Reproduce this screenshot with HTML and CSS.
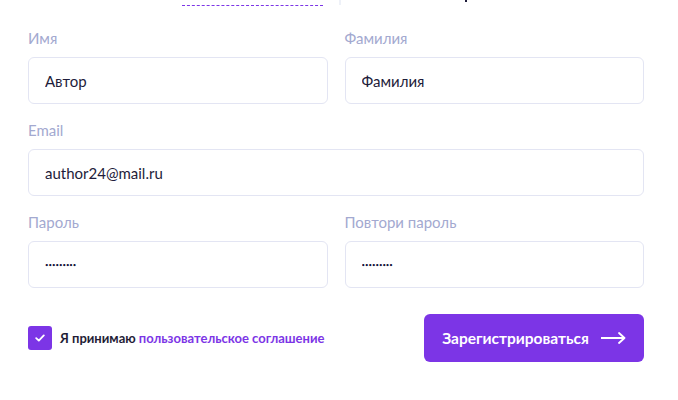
FILE: index.html
```html
<!DOCTYPE html>
<html lang="ru">
<head>
    <meta charset="UTF-8">
    <meta name="viewport" content="width=device-width, initial-scale=1.0">
    <title>Регистрация</title>
    <link rel="stylesheet" href="styles.css">
</head>
<body>
    <div class="tabs">
        <div class="tab tab-login"></div>
        <div class="tab-sep"></div>
        <div class="tab tab-reg"><span class="tab-mark"></span></div>
    </div>
    <form class="form">
        <div class="field">
            <label class="label">Имя</label>
            <input class="input" type="text" value="Автор">
        </div>
        <div class="field">
            <label class="label">Фамилия</label>
            <input class="input" type="text" value="Фамилия">
        </div>
        <div class="field wide">
            <label class="label">Email</label>
            <input class="input" type="text" value="author24@mail.ru">
        </div>
        <div class="field">
            <label class="label">Пароль</label>
            <input class="input pass" type="password" value="123456789">
        </div>
        <div class="field">
            <label class="label">Повтори пароль</label>
            <input class="input pass" type="password" value="123456789">
        </div>
        <div class="bottom wide">
            <label class="agree">
                <span class="check">
                    <svg width="10" height="8" viewBox="0 0 10 8"><path d="M1.2 4.2 L3.8 6.6 L8.8 1.4" fill="none" stroke="#fff" stroke-width="1.8" stroke-linecap="round" stroke-linejoin="round"/></svg>
                </span>
                <span>Я принимаю <a href="#" class="link">пользовательское соглашение</a></span>
            </label>
            <button class="submit" type="button">
                Зарегистрироваться
                <svg width="25" height="12" viewBox="0 0 25 12"><path d="M0 6 H23 M18 1 L23.5 6 L18 11" fill="none" stroke="#fff" stroke-width="1.8" stroke-linecap="round" stroke-linejoin="round"/></svg>
            </button>
        </div>
    </form>
</body>
</html>
```

FILE: styles.css
```css
body{
    margin:0;
    padding:0 34px 0 28px;
    background:#fff;
    font-family:Lato, "Noto Sans", sans-serif;
    color:#1e1c3a;
}
.tabs{
    display:flex;
    align-items:flex-end;
    height:6px;
    padding-left:154px;
}
.tab{
    height:6px;
}
.tab-login{
    width:141px;
    margin-right:16px;
    border-bottom:1px dashed #7c35e6;
    box-sizing:border-box;
}
.tab-sep{
    width:2px;
    height:5px;
    align-self:flex-start;
    background:#eef1f8;
}
.tab-reg{
    width:260px;
    position:relative;
}
/* descender of the cut-off tab title */
.tab-mark{
    position:absolute;
    left:124px;
    top:0;
    width:2px;
    height:2px;
    background:#1e1c3a;
}
.form{
    display:grid;
    grid-template-columns:1fr 1fr;
    column-gap:17px;
    row-gap:16px;
    margin-top:22px;
}
.field{
    display:flex;
    flex-direction:column;
}
.wide{
    grid-column:1 / 3;
}
.label{
    font-size:15px;
    line-height:20px;
    color:#a3a9d0;
    margin-bottom:9px;
}
.input{
    height:47px;
    box-sizing:border-box;
    border:1px solid #e3e5f3;
    border-radius:6px;
    padding:0 16px;
    font-family:inherit;
    font-size:15px;
    color:#1e1c3a;
    outline:none;
}
.pass{
    font-size:6px;
    letter-spacing:0;
    color:#15133a;
}
.bottom{
    display:flex;
    justify-content:space-between;
    align-items:center;
    margin-top:10px;
}
.agree{
    display:flex;
    align-items:center;
    gap:8px;
    font-size:13px;
    font-weight:700;
    color:#1f1d36;
}
.check{
    width:24px;
    height:24px;
    border-radius:3px;
    background:#7c35e6;
    display:flex;
    align-items:center;
    justify-content:center;
}
.link{
    color:#7c35e6;
    text-decoration:none;
}
.submit{
    width:220px;
    height:48px;
    border:none;
    border-radius:6px;
    background:#7c35e6;
    color:#fff;
    font-family:inherit;
    font-size:15.5px;
    font-weight:700;
    display:flex;
    align-items:center;
    justify-content:center;
    gap:12px;
}
```
